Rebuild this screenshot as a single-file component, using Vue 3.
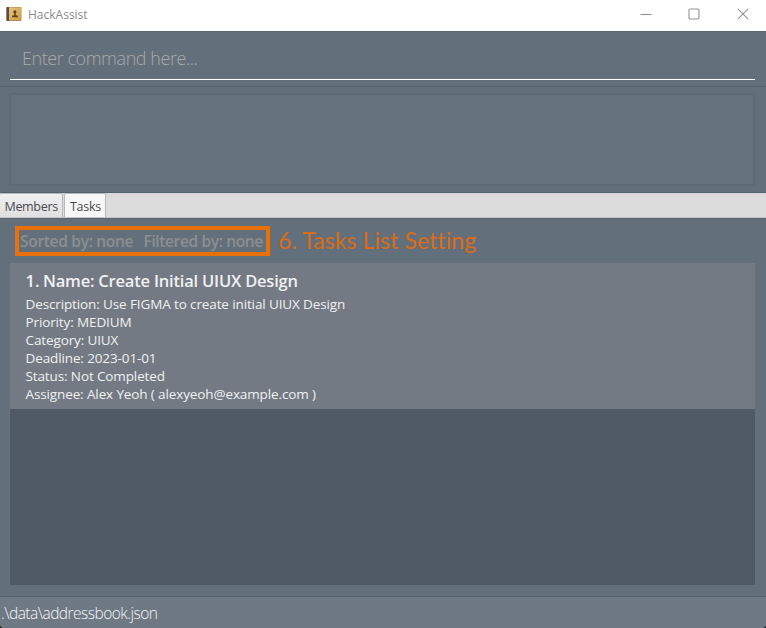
<script setup>
const tabs = [
  { label: 'Members', active: false },
  { label: 'Tasks', active: true },
]
const details = [
  'Description: Use FIGMA to create initial UIUX Design',
  'Priority: MEDIUM',
  'Category: UIUX',
  'Deadline: 2023-01-01',
  'Status: Not Completed',
  'Assignee: Alex Yeoh ( alexyeoh@example.com )',
]
</script>

<template>
  <div class="window">
    <header class="titlebar">
      <svg class="app-icon" viewBox="0 0 16 16">
        <defs>
          <linearGradient id="cover" x1="0" y1="0" x2="1" y2="1">
            <stop offset="0" stop-color="#e9c47d" />
            <stop offset="1" stop-color="#cf9a45" />
          </linearGradient>
        </defs>
        <rect x="0.5" y="1" width="15" height="14" rx="1" fill="#b88843" />
        <rect x="3" y="1.5" width="12" height="12.5" fill="url(#cover)" />
        <rect x="0.5" y="1" width="2.5" height="14" rx="0.7" fill="#5a4a4a" />
        <circle cx="8.9" cy="5.8" r="1.6" fill="#5a4526" />
        <path d="M8.2 7h1.5v2.2l2.2.6v1.4H6V9.8l2.2-.6z" fill="#5a4526" />
      </svg>
      <span class="app-name">HackAssist</span>
      <div class="controls">
        <svg viewBox="0 0 12 12"><path d="M.5 6.5h11" /></svg>
        <svg viewBox="0 0 12 12"><rect x="1" y="1" width="10" height="10" rx="1.2" /></svg>
        <svg viewBox="0 0 12 12"><path d="M.8.8l10.4 10.4M11.2.8L.8 11.2" /></svg>
      </div>
    </header>

    <section class="command"><div class="field"><span>Enter command here...</span></div></section>
    <section class="result"><div class="result-box"></div></section>

    <nav class="tabs">
      <div v-for="t in tabs" :key="t.label" class="tab" :class="[{ active: t.active }, t.label.toLowerCase()]">
        <span>{{ t.label }}</span>
      </div>
    </nav>

    <main class="content">
      <div class="settings">
        <div class="highlight">
          <span class="sorted">Sorted by: none</span>
          <span class="filtered">Filtered by: none</span>
        </div>
        <span class="note">6. Tasks List Setting</span>
      </div>
      <div class="list">
        <article class="card">
          <h2><span class="num">1.</span><span class="name">Name: Create Initial UIUX Design</span></h2>
          <p v-for="(d, i) in details" :key="i">{{ d }}</p>
        </article>
      </div>
    </main>

    <footer class="status"><span>.\data\addressbook.json</span></footer>
    <i class="corner left"></i>
    <i class="corner right"></i>
  </div>
</template>

<style>
body { margin: 0; overflow: hidden; }
</style>

<style scoped>
.window {
  position: relative;
  box-sizing: border-box;
  width: 766px;
  height: 628px;
  display: flex;
  flex-direction: column;
  background: #636f7b;
  font-family: "Open Sans", "Noto Sans", sans-serif;
  overflow: hidden;
  white-space: nowrap;
}
.titlebar { height: 31px; display: flex; align-items: center; background: #fff; padding-left: 6px; box-sizing: border-box; flex: none; }
.app-icon { width: 16px; height: 16px; margin-top: -3px; }
.app-name { margin: -3px 0 0 6px; font-size: 12px; letter-spacing: 0; color: #8b8b8b; }
.controls { margin: -3px 17.5px 0 auto; display: flex; gap: 36.5px; }
.controls svg { width: 12px; height: 12px; fill: none; stroke: #929292; stroke-width: 1.1; }
.command { height: 56px; flex: none; box-sizing: border-box; padding: 7px 11px 0 10px; border-top: 1px solid #57636f; border-bottom: 1px solid #56626e; }
.field { height: 41px; box-sizing: border-box; border-bottom: 1px solid #fff; padding: 0 0 2px 12px; display: flex; align-items: center; font-size: 18px; font-weight: 300; letter-spacing: -0.45px; color: #a9aaa9; }
.result { height: 106px; flex: none; box-sizing: border-box; padding: 6px 11px 7px 9px; border-bottom: 1px solid #56626e; }
.result-box { height: 93px; box-sizing: border-box; background: #65727d; border: 2px solid #5e6a75; }
.tabs { height: 25px; flex: none; box-sizing: border-box; display: flex; gap: 1px; background: linear-gradient(#dcd6d9, #dcdcdc 5px); border-bottom: 1px solid #c5c8cb; }
.tab { box-sizing: border-box; height: 24px; padding: 2px 0 0 4px; display: flex; align-items: center; background: linear-gradient(#f0f0f0, #dfdfdf); border: 1px solid #b8b8b8; border-width: 1px 1px 0 0; border-radius: 2px 2px 0 0; font-size: 12.5px; color: #4d4b50; }
.members { width: 63px; padding-left: 4.5px; letter-spacing: -0.32px; }
.tasks { width: 42px; padding-left: 5px; border-left-width: 1px; letter-spacing: -0.3px; }
.tab.active { background: #f7f7f7; }
.content { flex: none; height: 378px; box-sizing: border-box; padding: 8px 11px 0 10px; border-top: 1px solid #57636f; }
.settings { height: 36px; display: flex; padding-left: 5px; align-items: flex-start; }
.highlight { box-sizing: border-box; width: 255px; height: 30px; margin-top: -1px; border: 4px solid #e8710c; padding-left: 1px; display: flex; align-items: center; font-size: 15.5px; font-weight: 600; color: #8c8f90; }
.sorted { width: 123.5px; letter-spacing: -0.3px; }
.filtered { letter-spacing: -0.37px; }
.note { margin: -1px 0 0 8px; font-family: Lato, sans-serif; font-size: 23px; line-height: 28px; letter-spacing: 0.08px; color: #dc6c15; }
.list { height: 322px; box-sizing: border-box; background: #4f5a65; }
.card { height: 146px; box-sizing: border-box; padding: 7px 0 0 15.5px; background: #737a83; color: #f0f1f2; }
h2 { display: flex; margin: 0; font-size: 16.5px; line-height: 22px; font-weight: 600; }
.num { width: 17.5px; }
.name { letter-spacing: -0.2px; }
p { margin: 0; height: 18px; line-height: 18px; font-size: 13.5px; letter-spacing: -0.12px; }
h2 + p { margin-top: 3px; }
.status { flex: 1; box-sizing: border-box; display: flex; align-items: center; padding-left: 1px; border-top: 1px solid #56626e; background: #6e7984; font-size: 15.5px; font-weight: 300; letter-spacing: -0.52px; color: #f4f5f6; }
.corner { position: absolute; bottom: 0; width: 5px; height: 5px; }
.left { left: 0; background: radial-gradient(circle at 100% 0, transparent 5px, #222 6px); }
.right { right: 0; background: radial-gradient(circle at 0 0, transparent 5px, #222 6px); }
</style>
